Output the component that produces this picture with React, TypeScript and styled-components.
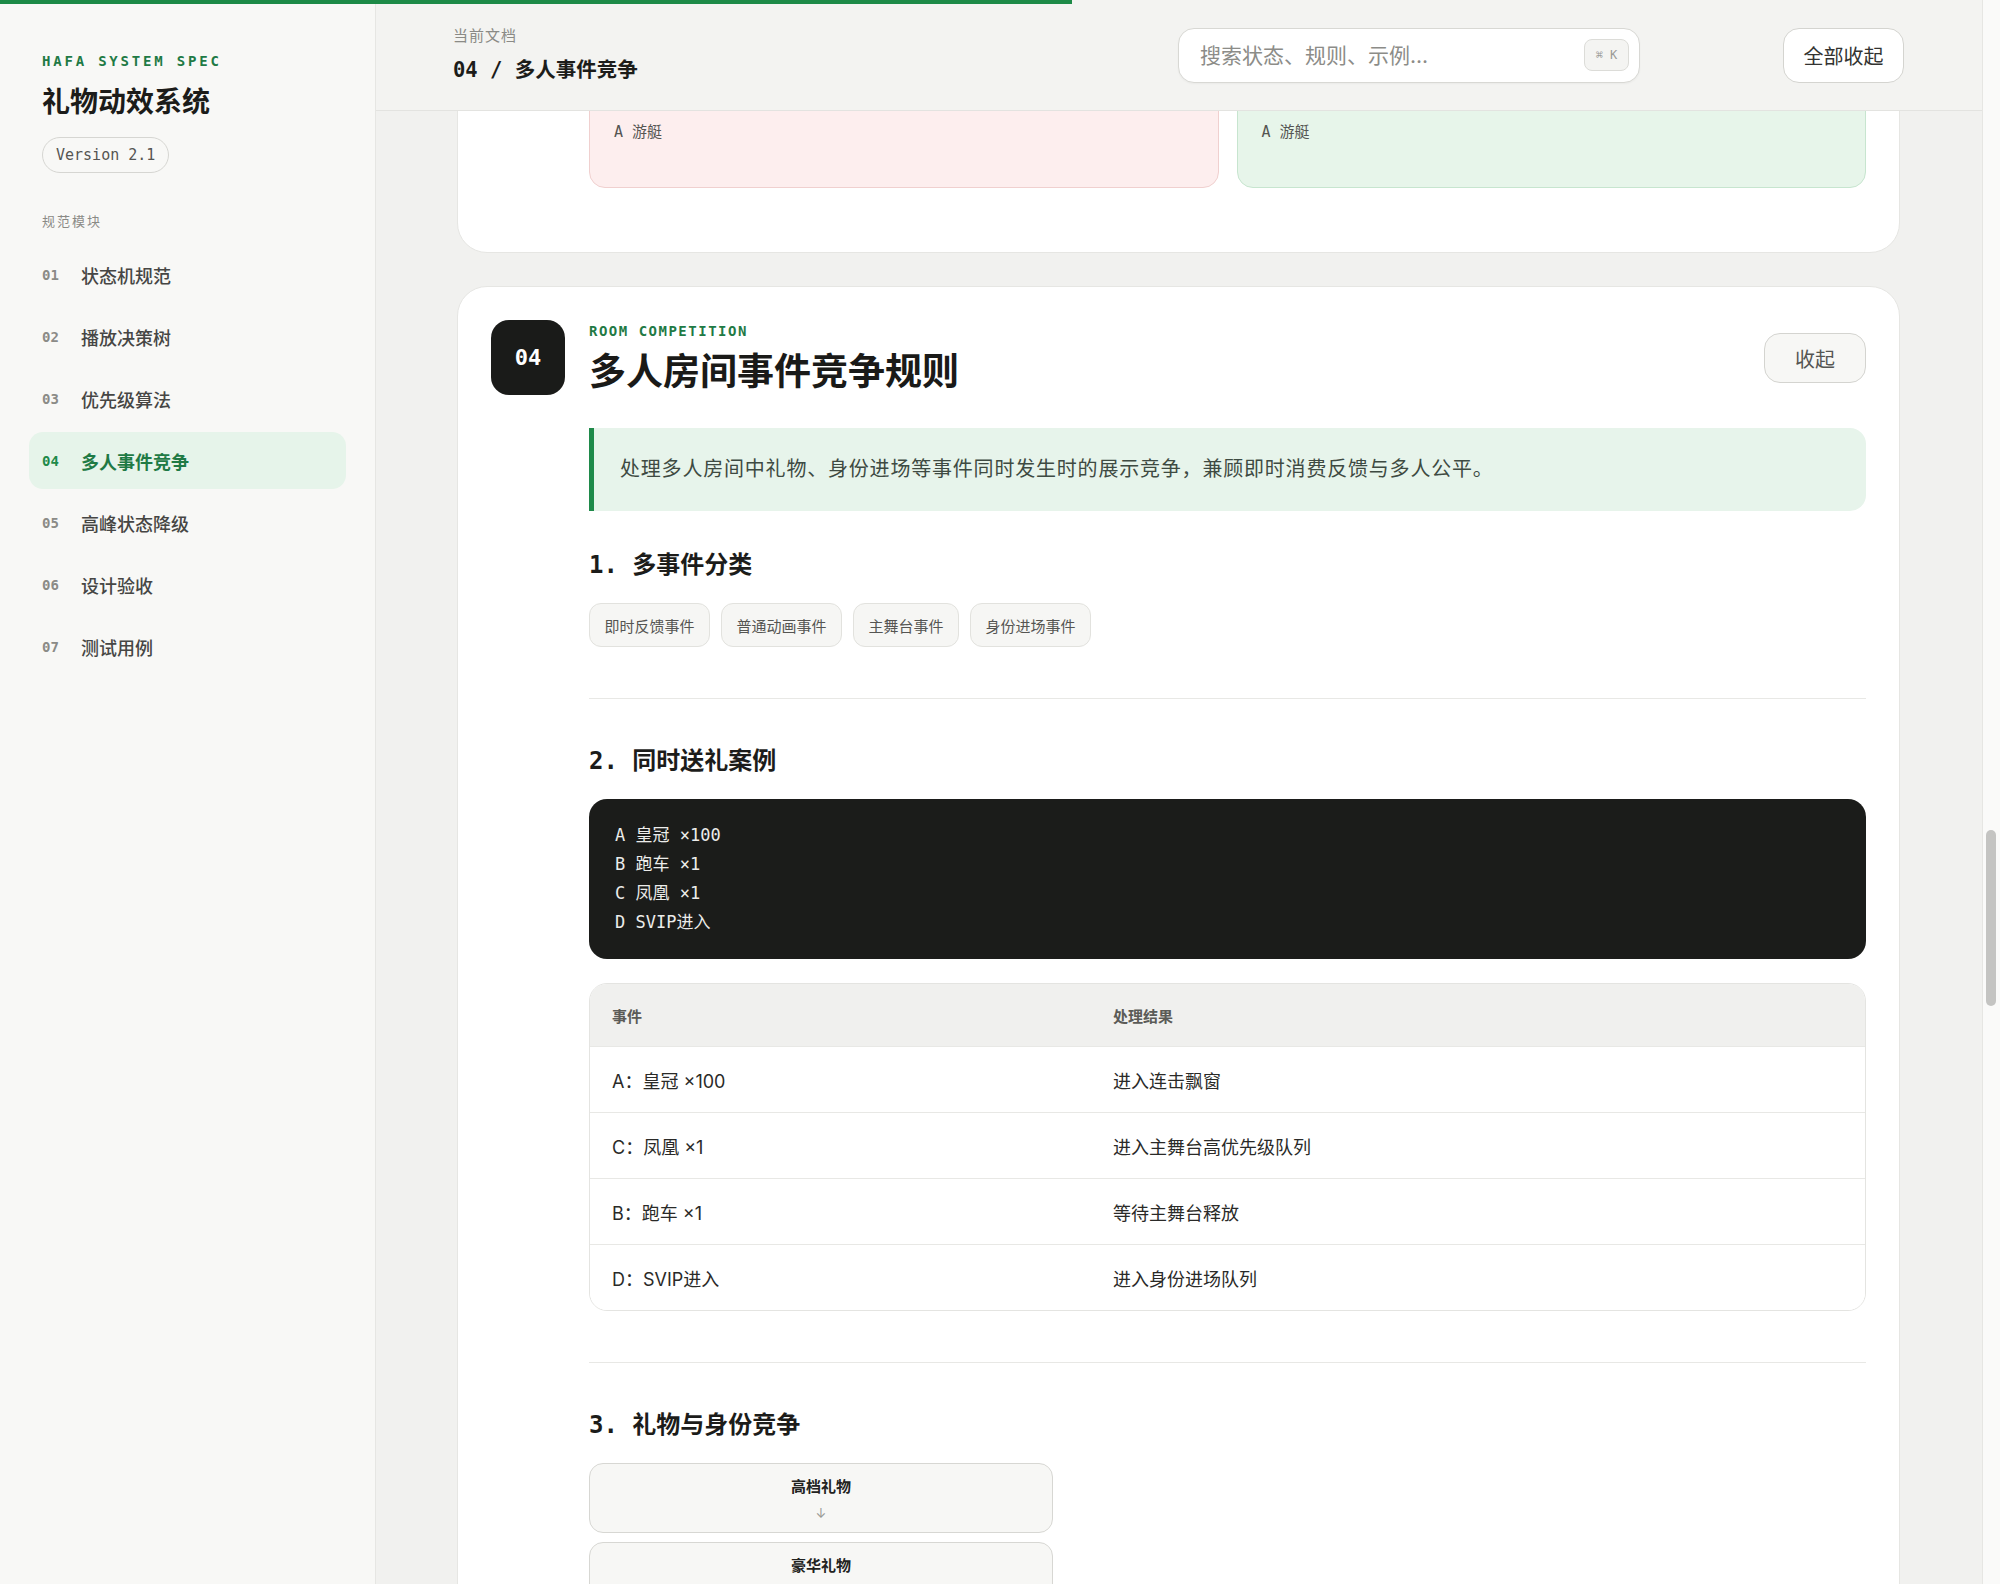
import React, { useLayoutEffect, useRef } from 'react';
import styled, { createGlobalStyle, css } from 'styled-components';

const sans = `Inter, "Noto Sans CJK SC", "Noto Sans", sans-serif`;
const mono = `"DejaVu Sans Mono", "Noto Sans CJK SC", monospace`;

const GlobalStyle = createGlobalStyle`
  html, body {
    margin: 0;
    padding: 0;
    height: 100%;
  }
  body {
    font-family: ${sans};
    color: #1c1c1a;
    background: #f1f1ef;
    overflow: hidden;
  }
  * {
    box-sizing: border-box;
  }
`;

const ProgressBar = styled.div<{ $value: number }>`
  position: fixed;
  top: 0;
  left: 0;
  height: 4px;
  width: ${(p) => p.$value}%;
  background: #1d8a47;
  z-index: 30;
`;

const Shell = styled.div`
  display: flex;
  height: 100vh;
`;

/* ---------- sidebar ---------- */

const Sidebar = styled.aside`
  width: 376px;
  flex-shrink: 0;
  height: 100vh;
  background: #f8f8f6;
  border-right: 1px solid #e6e6e3;
  padding: 53px 29px 0;
`;

const Brand = styled.div`
  padding-left: 13px;
`;

const BrandLabel = styled.div`
  font-family: ${mono};
  font-size: 14px;
  font-weight: 700;
  line-height: 16px;
  letter-spacing: 2.8px;
  color: #1f7a45;
`;

const BrandTitle = styled.h1`
  margin: 15px 0 0;
  font-size: 28px;
  line-height: 36px;
  font-weight: 700;
  color: #1c1c1a;
`;

const VersionPill = styled.span`
  display: inline-flex;
  align-items: center;
  height: 36px;
  margin-top: 17px;
  padding: 0 13px;
  border: 1px solid #d6d6d2;
  border-radius: 18px;
  font-family: ${mono};
  font-size: 15px;
  color: #555552;
`;

const NavLabel = styled.div`
  margin-top: 39px;
  padding-left: 13px;
  font-size: 13px;
  line-height: 18px;
  letter-spacing: 2px;
  color: #8a8a86;
`;

const NavList = styled.nav`
  display: flex;
  flex-direction: column;
  gap: 5px;
  margin-top: 16px;
`;

const NavItem = styled.a<{ $active?: boolean }>`
  display: flex;
  align-items: center;
  gap: 22px;
  height: 57px;
  padding: 0 13px;
  border-radius: 14px;
  text-decoration: none;
  background: ${(p) => (p.$active ? '#e6f4ea' : 'transparent')};
  color: ${(p) => (p.$active ? '#1f7a45' : '#464644')};
`;

const NavNo = styled.span<{ $active?: boolean }>`
  width: 17px;
  font-family: ${mono};
  font-size: 14px;
  font-weight: 700;
  color: ${(p) => (p.$active ? '#1f8a4a' : '#8b8b87')};
`;

const NavText = styled.span<{ $active?: boolean }>`
  font-size: 18px;
  font-weight: ${(p) => (p.$active ? 700 : 500)};
`;

/* ---------- main column ---------- */

const Main = styled.main`
  position: relative;
  flex: 1;
  min-width: 0;
  height: 100vh;
  overflow-y: scroll;
  scrollbar-width: none;

  &::-webkit-scrollbar {
    display: none;
  }
`;

// page scrollbar, drawn beside the scrolling column
const ScrollTrack = styled.div`
  position: relative;
  width: 18px;
  flex-shrink: 0;
  height: 100vh;
  background: #fafaf9;
  border-left: 1px solid #e6e6e3;
`;

const ScrollThumb = styled.div<{ $top: number; $height: number }>`
  position: absolute;
  left: 3px;
  top: ${(p) => p.$top}px;
  width: 10px;
  height: ${(p) => p.$height}px;
  border-radius: 5px;
  background: #c4c4c2;
`;

const TopBar = styled.header`
  position: sticky;
  top: 0;
  z-index: 10;
  display: flex;
  align-items: center;
  height: 111px;
  padding: 0 78px 0 77px;
  background: #f3f3f1;
  border-bottom: 1px solid #e3e3e0;
`;

const Crumbs = styled.div`
  flex: 1;
`;

const CrumbLabel = styled.div`
  font-size: 15px;
  line-height: 20px;
  letter-spacing: 1px;
  color: #8a8a86;
`;

const CrumbTitle = styled.div`
  margin-top: 10px;
  font-family: ${mono};
  font-size: 20.5px;
  font-weight: 700;
  line-height: 28px;
  color: #1c1c1a;
`;

const Search = styled.label`
  display: flex;
  align-items: center;
  width: 462px;
  height: 55px;
  padding: 0 10px 0 19px;
  background: #fff;
  border: 1px solid #d8d8d4;
  border-radius: 16px;
  box-shadow: 0 1px 2px rgba(0, 0, 0, 0.04);
`;

const SearchInput = styled.input`
  flex: 1;
  min-width: 0;
  border: none;
  outline: none;
  background: transparent;
  font-family: ${sans};
  font-size: 21px;
  color: #1c1c1a;

  &::placeholder {
    color: #8c8c88;
  }
`;

const Kbd = styled.kbd`
  display: inline-flex;
  align-items: center;
  justify-content: center;
  width: 45px;
  height: 32px;
  border: 1px solid #dcdcd8;
  border-radius: 8px;
  background: #f4f4f2;
  font-family: ${mono};
  font-size: 12px;
  color: #9a9a96;
`;

const outlineButton = css`
  display: inline-flex;
  align-items: center;
  justify-content: center;
  border: 1px solid #d4d4d0;
  border-radius: 16px;
  font-family: ${sans};
  font-size: 20px;
  cursor: pointer;
`;

const CollapseAll = styled.button`
  ${outlineButton};
  width: 121px;
  height: 55px;
  margin-left: 143px;
  background: #fff;
  color: #333331;
`;

const Content = styled.div`
  display: flex;
  flex-direction: column;
  gap: 33px;
  padding: 40px 82px 600px 81px;
`;

/* ---------- spec cards ---------- */

const Card = styled.section`
  background: #fff;
  border: 1px solid #e6e6e3;
  border-radius: 30px;
  padding: 33px 33px 64px;
`;

const CardHead = styled.div`
  display: flex;
  align-items: flex-start;
  gap: 24px;
`;

const Badge = styled.div`
  display: flex;
  align-items: center;
  justify-content: center;
  width: 74px;
  height: 75px;
  flex-shrink: 0;
  border-radius: 18px;
  background: #1a1b19;
  color: #fff;
  font-family: ${mono};
  font-size: 22px;
  font-weight: 700;
`;

const TitleBlock = styled.div`
  flex: 1;
  padding-top: 3px;
`;

const EnLabel = styled.div`
  font-family: ${mono};
  font-size: 14px;
  font-weight: 700;
  line-height: 16px;
  letter-spacing: 1.5px;
  color: #1f7a45;
`;

const CardTitle = styled.h2`
  margin: 11px 0 0;
  font-size: 37px;
  font-weight: 700;
  line-height: 44px;
  color: #1a1a18;
`;

const CollapseButton = styled.button`
  ${outlineButton};
  width: 102px;
  height: 50px;
  margin-top: 13px;
  background: #f7f7f5;
  color: #555552;
`;

const CardBody = styled.div`
  margin-left: 98px;
`;

const Summary = styled.p`
  margin: 33px 0 0;
  padding: 25px 28px 25px 26px;
  background: #e7f4eb;
  border-left: 5px solid #1f8a4a;
  border-radius: 0 16px 16px 0;
  font-size: 20px;
  line-height: 33px;
  letter-spacing: 0.8px;
  color: #3e4a42;
`;

const Part = styled.div`
  margin-top: 37px;

  & + & {
    margin-top: 51px;
    padding-top: 45px;
    border-top: 1px solid #e8e8e5;
  }
`;

const PartHeading = styled.h3`
  margin: 0 0 21px;
  font-family: ${mono};
  font-size: 24px;
  font-weight: 700;
  line-height: 34px;
  color: #1c1c1a;
`;

const Blocks = styled.div`
  display: flex;
  flex-direction: column;
  gap: 24px;
`;

const TagRow = styled.div`
  display: flex;
  flex-wrap: wrap;
  gap: 11px;
`;

const Tag = styled.span`
  display: inline-flex;
  align-items: center;
  height: 44px;
  padding: 0 14.5px;
  border: 1px solid #e2e2de;
  border-radius: 12px;
  background: #f6f6f4;
  font-size: 15px;
  color: #555552;
`;

const CodeBlock = styled.pre`
  margin: 0;
  padding: 22px 26px;
  border-radius: 18px;
  background: #1b1c1a;
  font-family: ${mono};
  font-size: 17px;
  line-height: 29px;
  color: #ececea;
`;

const CodeLine = styled.div`
  height: 29px;
`;

const Table = styled.div`
  border: 1px solid #e4e4e1;
  border-radius: 18px;
  overflow: hidden;
`;

const TableRow = styled.div<{ $head?: boolean }>`
  display: grid;
  grid-template-columns: 501px 1fr;
  height: ${(p) => (p.$head ? 62 : 66)}px;
  background: ${(p) => (p.$head ? '#f0f0ee' : '#fff')};
  font-size: ${(p) => (p.$head ? 15 : 18)}px;
  font-weight: ${(p) => (p.$head ? 600 : 400)};
  color: ${(p) => (p.$head ? '#5b5b57' : '#2a2a28')};

  & + & {
    border-top: 1px solid #e8e8e5;
  }
`;

const Cell = styled.div`
  display: flex;
  align-items: center;
  padding: 0 22px;
`;

const Flow = styled.div`
  display: flex;
  flex-direction: column;
  gap: 9px;
  width: 464px;
`;

const FlowBox = styled.div`
  padding: 12px 0 10px;
  border: 1px solid #d7d7d3;
  border-radius: 14px;
  background: #f7f7f5;
  text-align: center;
`;

const FlowTitle = styled.div`
  font-size: 15px;
  font-weight: 700;
  line-height: 22px;
  color: #222220;
`;

const FlowArrow = styled.div`
  margin-top: 6px;
  font-size: 13px;
  line-height: 18px;
  color: #9a9a96;
`;

const Compare = styled.div`
  display: grid;
  grid-template-columns: 1fr 1fr;
  gap: 18px;
`;

const CompareBox = styled.div<{ $tone: 'bad' | 'good' }>`
  padding: 20px 24px 42px;
  border-radius: 16px;
  border: 1px solid ${(p) => (p.$tone === 'bad' ? '#f0d0cf' : '#c7e5cf')};
  background: ${(p) => (p.$tone === 'bad' ? '#fdeeee' : '#e7f5ea')};
`;

const CompareTitle = styled.div<{ $tone: 'bad' | 'good' }>`
  margin-bottom: 22px;
  font-size: 15px;
  font-weight: 700;
  line-height: 22px;
  color: ${(p) => (p.$tone === 'bad' ? '#b23a36' : '#1f7a45')};
`;

const CompareLine = styled.div`
  font-family: ${mono};
  font-size: 15px;
  line-height: 26px;
  color: #555552;
`;

/* ---------- data ---------- */

type Block =
  | { kind: 'tags'; items: string[] }
  | { kind: 'code'; lines: string[] }
  | { kind: 'table'; head: [string, string]; rows: [string, string][] }
  | { kind: 'flow'; items: string[] }
  | {
      kind: 'compare';
      bad: { title: string; lines: string[] };
      good: { title: string; lines: string[] };
    };

interface SpecPart {
  heading: string;
  blocks: Block[];
}

interface Spec {
  no: string;
  nav: string;
  en: string;
  title: string;
  summary: string;
  parts: SpecPart[];
}

const specs: Spec[] = [
  {
    no: '01',
    nav: '状态机规范',
    en: 'STATE MACHINE',
    title: '礼物动效状态机规范',
    summary: '定义礼物从触发、排队、加载、播放到回收的完整生命周期，保证状态切换可预期。',
    parts: [
      { heading: '核心状态', blocks: [{ kind: 'tags', items: ['空闲', '排队中', '加载中', '播放中', '回收'] }] },
      { heading: '状态流转', blocks: [{ kind: 'flow', items: ['触发', '排队', '加载', '播放', '回收'] }] },
    ],
  },
  {
    no: '02',
    nav: '播放决策树',
    en: 'DECISION TREE',
    title: '播放决策树',
    summary: '根据礼物档位、资源状态与舞台占用情况，决定事件进入哪一条播放通道。',
    parts: [
      {
        heading: '决策入口',
        blocks: [
          { kind: 'code', lines: ['if 资源未就绪 -> 降级为静态飘窗', 'if 主舞台占用 -> 进入等待队列', 'else -> 立即播放'] },
          {
            kind: 'table',
            head: ['条件', '播放通道'],
            rows: [
              ['资源已就绪', '主舞台'],
              ['资源加载超时', '静态飘窗'],
            ],
          },
        ],
      },
    ],
  },
  {
    no: '03',
    nav: '优先级算法',
    en: 'PRIORITY SCORE',
    title: '优先级算法',
    summary: '以礼物价值、身份权重和连击系数计算排队分值，分值相同则按到达顺序处理。',
    parts: [
      { heading: '分值公式', blocks: [{ kind: 'code', lines: ['score = 价值 × 0.6 + 身份 × 0.3 + 连击 × 0.1'] }] },
      {
        heading: '同分处理',
        blocks: [
          {
            kind: 'compare',
            bad: { title: '✕ 后到先播', lines: ['A 游艇'] },
            good: { title: '✓ 先到先播', lines: ['A 游艇'] },
          },
        ],
      },
    ],
  },
  {
    no: '04',
    nav: '多人事件竞争',
    en: 'ROOM COMPETITION',
    title: '多人房间事件竞争规则',
    summary: '处理多人房间中礼物、身份进场等事件同时发生时的展示竞争，兼顾即时消费反馈与多人公平。',
    parts: [
      { heading: '多事件分类', blocks: [{ kind: 'tags', items: ['即时反馈事件', '普通动画事件', '主舞台事件', '身份进场事件'] }] },
      {
        heading: '同时送礼案例',
        blocks: [
          { kind: 'code', lines: ['A 皇冠 ×100', 'B 跑车 ×1', 'C 凤凰 ×1', 'D SVIP进入'] },
          {
            kind: 'table',
            head: ['事件', '处理结果'],
            rows: [
              ['A：皇冠 ×100', '进入连击飘窗'],
              ['C：凤凰 ×1', '进入主舞台高优先级队列'],
              ['B：跑车 ×1', '等待主舞台释放'],
              ['D：SVIP进入', '进入身份进场队列'],
            ],
          },
        ],
      },
      { heading: '礼物与身份竞争', blocks: [{ kind: 'flow', items: ['高档礼物', '豪华礼物', '身份进场', '普通礼物'] }] },
      { heading: '公平性约束', blocks: [{ kind: 'tags', items: ['单用户连续占用上限', '等待超时补偿', '同档位轮转'] }] },
    ],
  },
  {
    no: '05',
    nav: '高峰状态降级',
    en: 'PEAK DEGRADE',
    title: '高峰状态降级策略',
    summary: '房间事件密度超过阈值时，按档位逐级合并、缩短或降级动画，保证核心反馈不丢失。',
    parts: [
      { heading: '降级档位', blocks: [{ kind: 'tags', items: ['L1 合并连击', 'L2 缩短时长', 'L3 静态飘窗'] }] },
      {
        heading: '触发阈值',
        blocks: [
          {
            kind: 'table',
            head: ['事件密度', '降级档位'],
            rows: [
              ['≥ 20 / 秒', 'L1'],
              ['≥ 50 / 秒', 'L2'],
              ['≥ 100 / 秒', 'L3'],
            ],
          },
        ],
      },
    ],
  },
  {
    no: '06',
    nav: '设计验收',
    en: 'DESIGN REVIEW',
    title: '设计验收标准',
    summary: '从时长、层级、遮挡与性能四个维度验收礼物动效，确保体验一致。',
    parts: [{ heading: '验收维度', blocks: [{ kind: 'tags', items: ['播放时长', '层级关系', '遮挡区域', '性能开销'] }] }],
  },
  {
    no: '07',
    nav: '测试用例',
    en: 'TEST CASES',
    title: '测试用例',
    summary: '覆盖单人、多人、高峰与弱网场景，验证状态机与竞争规则的正确性。',
    parts: [
      { heading: '场景清单', blocks: [{ kind: 'code', lines: ['case 01 单人连击', 'case 02 多人同时送礼', 'case 03 高峰降级', 'case 04 弱网加载'] }] },
    ],
  },
];

const ACTIVE = '04';

/* ---------- render ---------- */

const renderBlock = (block: Block, key: number) => {
  switch (block.kind) {
    case 'tags':
      return (
        <TagRow key={key}>
          {block.items.map((t) => (
            <Tag key={t}>{t}</Tag>
          ))}
        </TagRow>
      );
    case 'code':
      return (
        <CodeBlock key={key}>
          {block.lines.map((l, i) => (
            <CodeLine key={i}>{l}</CodeLine>
          ))}
        </CodeBlock>
      );
    case 'table':
      return (
        <Table key={key}>
          <TableRow $head>
            <Cell>{block.head[0]}</Cell>
            <Cell>{block.head[1]}</Cell>
          </TableRow>
          {block.rows.map(([a, b]) => (
            <TableRow key={a}>
              <Cell>{a}</Cell>
              <Cell>{b}</Cell>
            </TableRow>
          ))}
        </Table>
      );
    case 'flow':
      return (
        <Flow key={key}>
          {block.items.map((t, i) => (
            <FlowBox key={t}>
              <FlowTitle>{t}</FlowTitle>
              {i < block.items.length - 1 && <FlowArrow>↓</FlowArrow>}
            </FlowBox>
          ))}
        </Flow>
      );
    case 'compare':
      return (
        <Compare key={key}>
          {(['bad', 'good'] as const).map((tone) => (
            <CompareBox key={tone} $tone={tone}>
              <CompareTitle $tone={tone}>{block[tone].title}</CompareTitle>
              {block[tone].lines.map((l, i) => (
                <CompareLine key={i}>{l}</CompareLine>
              ))}
            </CompareBox>
          ))}
        </Compare>
      );
  }
};

const SpecCard = React.forwardRef<HTMLElement, { spec: Spec }>(({ spec }, ref) => (
  <Card ref={ref} id={`spec-${spec.no}`}>
    <CardHead>
      <Badge>{spec.no}</Badge>
      <TitleBlock>
        <EnLabel>{spec.en}</EnLabel>
        <CardTitle>{spec.title}</CardTitle>
      </TitleBlock>
      <CollapseButton>收起</CollapseButton>
    </CardHead>
    <CardBody>
      <Summary>{spec.summary}</Summary>
      {spec.parts.map((part, i) => (
        <Part key={part.heading}>
          <PartHeading>{`${i + 1}. ${part.heading}`}</PartHeading>
          <Blocks>{part.blocks.map(renderBlock)}</Blocks>
        </Part>
      ))}
    </CardBody>
  </Card>
));

const App: React.FC = () => {
  const mainRef = useRef<HTMLElement>(null);
  const activeRef = useRef<HTMLElement>(null);
  const current = specs.find((s) => s.no === ACTIVE)!;

  useLayoutEffect(() => {
    const main = mainRef.current;
    const card = activeRef.current;
    if (main && card) main.scrollTop = card.offsetTop - 286;
  }, []);

  return (
    <>
      <GlobalStyle />
      <ProgressBar $value={53.6} />
      <Shell>
        <Sidebar>
          <Brand>
            <BrandLabel>HAFA SYSTEM SPEC</BrandLabel>
            <BrandTitle>礼物动效系统</BrandTitle>
            <VersionPill>Version 2.1</VersionPill>
          </Brand>
          <NavLabel>规范模块</NavLabel>
          <NavList>
            {specs.map((s) => {
              const active = s.no === ACTIVE;
              return (
                <NavItem key={s.no} href={`#spec-${s.no}`} $active={active}>
                  <NavNo $active={active}>{s.no}</NavNo>
                  <NavText $active={active}>{s.nav}</NavText>
                </NavItem>
              );
            })}
          </NavList>
        </Sidebar>

        <Main ref={mainRef}>
          <TopBar>
            <Crumbs>
              <CrumbLabel>当前文档</CrumbLabel>
              <CrumbTitle>{`${current.no} / ${current.nav}`}</CrumbTitle>
            </Crumbs>
            <Search>
              <SearchInput placeholder="搜索状态、规则、示例..." />
              <Kbd>⌘ K</Kbd>
            </Search>
            <CollapseAll>全部收起</CollapseAll>
          </TopBar>
          <Content>
            {specs.map((s) => (
              <SpecCard key={s.no} spec={s} ref={s.no === ACTIVE ? activeRef : undefined} />
            ))}
          </Content>
        </Main>

        <ScrollTrack>
          <ScrollThumb $top={830} $height={176} />
        </ScrollTrack>
      </Shell>
    </>
  );
};

export default App;
